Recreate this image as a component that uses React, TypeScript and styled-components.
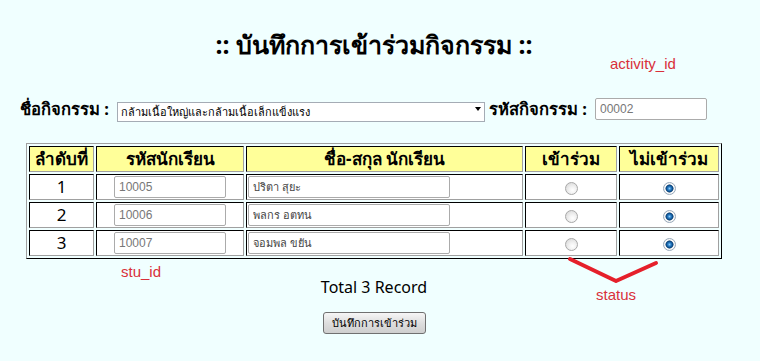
import React from "react";
import styled, { createGlobalStyle } from "styled-components";

const Global = createGlobalStyle`
  html, body { margin: 0; padding: 0; background: #f0ffff; }
  body { font-family: Tahoma, "Noto Sans", "DejaVu Sans", sans-serif; color: #000; }
`;

const Page = styled.div`
  position: relative;
  width: 748px;
  height: 361px;
  display: flex;
  flex-direction: column;
  align-items: center;
`;

const Title = styled.h1`
  margin: 30px 0 0;
  font-size: 25px;
  font-weight: bold;
  line-height: 28px;
  white-space: nowrap;
`;

const FormRow = styled.div`
  align-self: flex-start;
  margin: 40px 0 0 20px;
  display: flex;
  align-items: center;
  height: 22px;
`;

const Label = styled.span`
  font-size: 16.6px;
  font-weight: bold;
  white-space: nowrap;
  margin-right: 8px;
`;

const SelectWrap = styled.div`
  position: relative;
  width: 368px;
  height: 20px;
  margin-right: 4px;
`;

const Select = styled.select`
  appearance: none;
  width: 100%;
  height: 100%;
  box-sizing: border-box;
  border: 1px solid #a5acb5;
  background: #fff;
  font-family: Tahoma, "Noto Sans", sans-serif;
  font-size: 11px;
  padding: 0 0 0 3px;
  color: #000;
  outline: none;
`;

const Caret = styled.span`
  position: absolute;
  right: 4px;
  top: 8px;
  width: 0;
  height: 0;
  border-left: 3.5px solid transparent;
  border-right: 3.5px solid transparent;
  border-top: 4px solid #000;
  pointer-events: none;
`;

const TextInput = styled.input<{ $w: number; $h?: number; $size?: number; $color?: string; $thai?: boolean }>`
  box-sizing: border-box;
  width: ${(p) => p.$w}px;
  height: ${(p) => p.$h ?? 22}px;
  border: 1px solid #ababab;
  border-radius: 2px;
  background: #fff;
  padding: 0 0 0 4px;
  font-family: ${(p) => (p.$thai ? 'Tahoma, "Noto Sans", sans-serif' : '"Liberation Sans", Arial, sans-serif')};
  font-size: ${(p) => p.$size ?? 12}px;
  color: ${(p) => p.$color ?? "#777"};
  outline: none;
  vertical-align: middle;
`;

const Table = styled.table`
  margin-top: 23px;
  width: 696px;
  border-collapse: separate;
  border-spacing: 2px;
  border: 1px solid;
  border-color: #a0a0a0 #000 #000 #a0a0a0;
`;

const Th = styled.th<{ $w: number }>`
  width: ${(p) => p.$w}px;
  height: 26px;
  box-sizing: border-box;
  padding: 0;
  background: #ffff99;
  border: 1px solid;
  border-color: #000 #a0a0a0 #a0a0a0 #000;
  font-size: 17px;
  line-height: 20px;
  font-weight: bold;
  text-align: center;
  white-space: nowrap;
`;

const Td = styled.td<{ $align?: string }>`
  height: 26px;
  box-sizing: border-box;
  padding: 0 1px;
  background: #fff;
  border: 1px solid;
  border-color: #000 #a0a0a0 #a0a0a0 #000;
  font-size: 17px;
  line-height: 20px;
  text-align: ${(p) => p.$align ?? "center"};
  vertical-align: middle;
`;

const Radio = styled.input.attrs({ type: "radio" })`
  appearance: none;
  margin: 0;
  width: 13px;
  height: 13px;
  border-radius: 50%;
  border: 1px solid #a8a8a8;
  box-sizing: border-box;
  background: radial-gradient(circle at 60% 65%, #ffffff 0%, #f2f2f2 35%, #d2d2d2 100%);
  vertical-align: middle;
  &:checked {
    border-color: #9aaabb;
    background:
      radial-gradient(circle at 50% 50%, #8fd0ff 0px, #2a7fc8 1.6px, #0b4a86 3.2px, #4d6f90 3.9px, transparent 4.3px),
      radial-gradient(circle, #ffffff 55%, #d8d8d8 100%);
  }
`;

const Total = styled.div`
  margin-top: 18px;
  font-size: 16px;
  line-height: 20px;
`;

const SaveButton = styled.button`
  margin-top: 15px;
  width: 103px;
  height: 22px;
  box-sizing: border-box;
  border: 1px solid #707070;
  border-radius: 3px;
  background: linear-gradient(#f6f6f6, #dedede 50%, #cfcfcf);
  font-family: Tahoma, "Noto Sans", sans-serif;
  font-size: 11px;
  color: #000;
  padding: 0;
`;

const Note = styled.span<{ $x: number; $y: number }>`
  position: absolute;
  left: ${(p) => p.$x}px;
  top: ${(p) => p.$y}px;
  font-family: "Liberation Sans", Arial, sans-serif;
  font-size: 15px;
  color: #d9303a;
  line-height: 17px;
`;

const Arrow = styled.svg`
  position: absolute;
  left: 566px;
  top: 256px;
`;

const rows = [
  { n: 1, id: "10005", name: "ปริตา สุยะ" },
  { n: 2, id: "10006", name: "พลกร อตทน" },
  { n: 3, id: "10007", name: "จอมพล ขยัน" },
];

export default function App() {
  return (
    <>
      <Global />
      <Page>
        <Title>:: บันทึกการเข้าร่วมกิจกรรม ::</Title>
        <FormRow>
          <Label>ชื่อกิจกรรม :</Label>
          <SelectWrap>
            <Select defaultValue="a">
              <option value="a">กล้ามเนื้อใหญ่และกล้ามเนื้อเล็กแข็งแรง</option>
            </Select>
            <Caret />
          </SelectWrap>
          <Label>รหัสกิจกรรม :</Label>
          <TextInput $w={112} $h={22} defaultValue="00002" />
        </FormRow>
        <Table>
          <thead>
            <tr>
              <Th $w={65}>ลำดับที่</Th>
              <Th $w={148}>รหัสนักเรียน</Th>
              <Th $w={277}>ชื่อ-สกุล นักเรียน</Th>
              <Th $w={92}>เข้าร่วม</Th>
              <Th $w={100}>ไม่เข้าร่วม</Th>
            </tr>
          </thead>
          <tbody>
            {rows.map((r) => (
              <tr key={r.n}>
                <Td>{r.n}</Td>
                <Td>
                  <TextInput $w={112} $h={22} defaultValue={r.id} />
                </Td>
                <Td $align="left">
                  <TextInput $w={202} $h={22} $size={11} $color="#444" $thai defaultValue={r.name} />
                </Td>
                <Td>
                  <Radio name={`s${r.n}`} />
                </Td>
                <Td>
                  <Radio name={`s${r.n}`} defaultChecked />
                </Td>
              </tr>
            ))}
          </tbody>
        </Table>
        <Total>Total 3 Record</Total>
        <SaveButton>บันทึกการเข้าร่วม</SaveButton>
        <Note $x={610} $y={55}>activity_id</Note>
        <Note $x={121} $y={263}>stu_id</Note>
        <Note $x={596} $y={286}>status</Note>
        <Arrow width="96" height="32" viewBox="0 0 96 32">
          <polyline points="4,3 50,25 90,7" fill="none" stroke="#e5202b" strokeWidth="4" strokeLinejoin="round" strokeLinecap="round" />
        </Arrow>
      </Page>
    </>
  );
}
